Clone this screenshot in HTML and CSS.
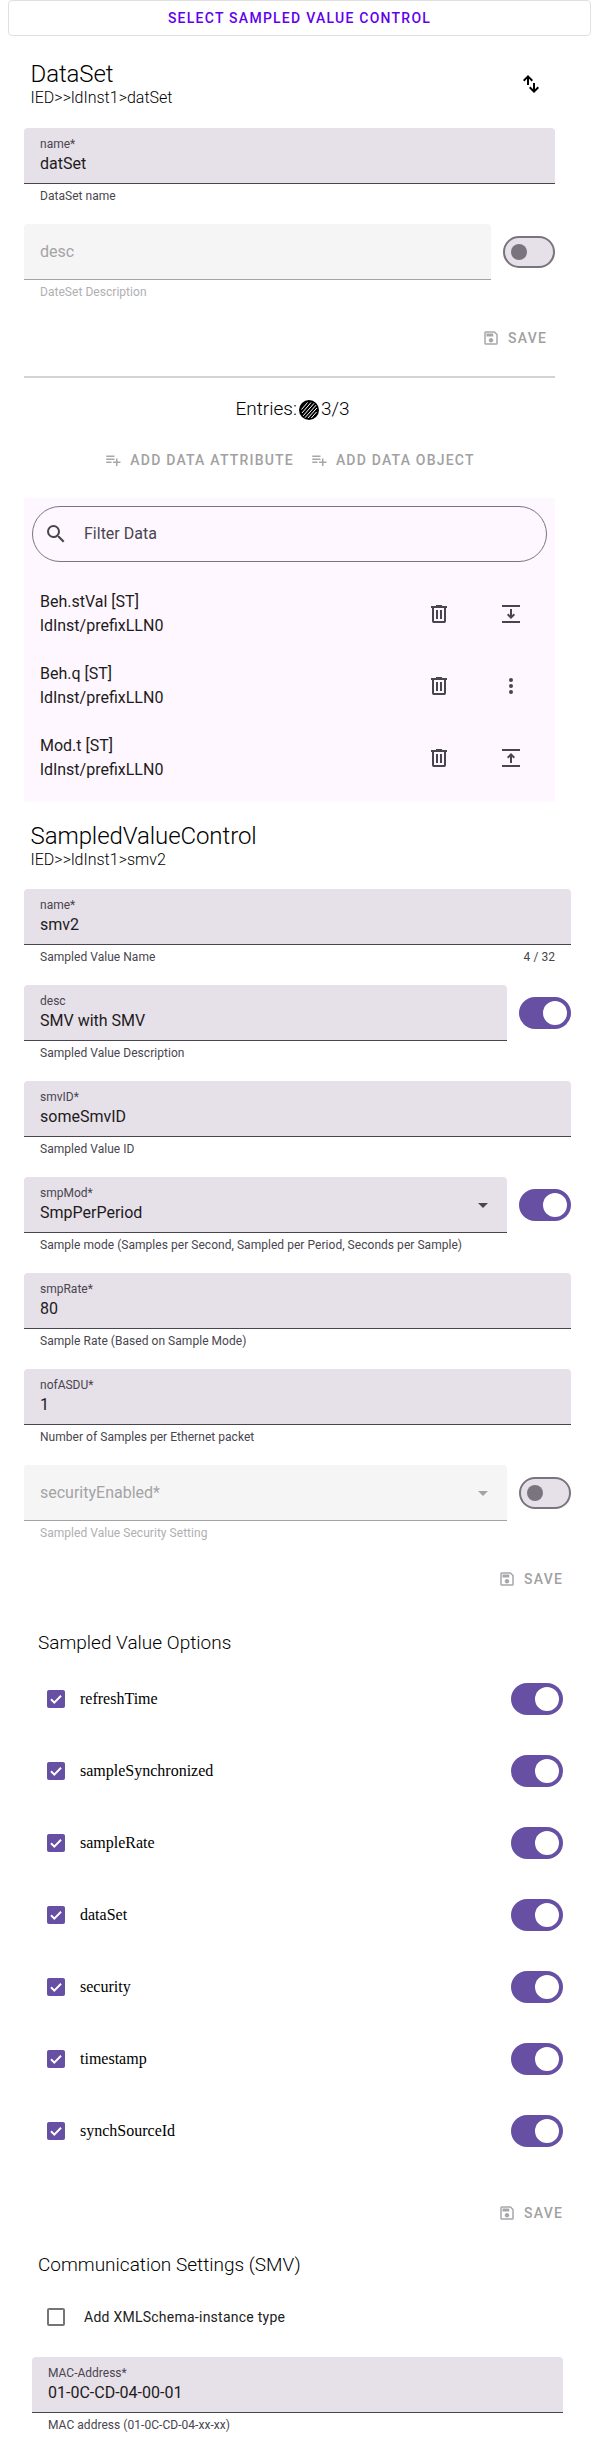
FILE: index.html
```html
<!DOCTYPE html>
<html lang="en">
<head>
<meta charset="utf-8">
<title>Sampled Value Control</title>
<link rel="stylesheet" href="styles.css">
</head>
<body>
<svg class="sprite" aria-hidden="true">
  <symbol id="save" viewBox="0 0 24 24"><path d="M17 3H5a2 2 0 0 0-2 2v14a2 2 0 0 0 2 2h14a2 2 0 0 0 2-2V7l-4-4zm2 16H5V5h11.17L19 7.83V19zm-7-7c-1.66 0-3 1.34-3 3s1.34 3 3 3 3-1.34 3-3-1.34-3-3-3zM6 6h9v4H6z"/></symbol>
  <symbol id="add" viewBox="0 0 24 24"><path d="M14 10H3v2h11v-2zm0-4H3v2h11V6zm4 8v-4h-2v4h-4v2h4v4h2v-4h4v-2h-4zM3 16h7v-2H3v2z"/></symbol>
  <symbol id="trash" viewBox="0 0 24 24"><path d="M7 21q-.825 0-1.412-.587Q5 19.825 5 19V6H4V4h5V3h6v1h5v2h-1v13q0 .825-.587 1.413Q17.825 21 17 21ZM17 6H7v13h10ZM9 17h2V8H9Zm4 0h2V8h-2Z"/></symbol>
  <symbol id="drop" viewBox="0 0 24 24"><path d="M7 10l5 5 5-5z"/></symbol>
  <symbol id="check" viewBox="0 0 18 18"><path d="M4 9.3l3.3 3.3L14 5.8" fill="none" stroke="#fff" stroke-width="2"/></symbol>
</svg>

<button class="select">Select Sampled Value Control</button>

<main>
  <section class="dataset">
    <header class="head">
      <div><h2>DataSet</h2><p>IED&gt;&gt;ldInst1&gt;datSet</p></div>
      <svg class="icon swap" viewBox="0 0 24 24"><path d="M8 13V6.825L5.4 9.4 4 8l5-5 5 5-1.4 1.4L10 6.825V13Zm7 8-5-5 1.4-1.4 2.6 2.575V11h2v6.175l2.6-2.575L20 16Z"/></svg>
    </header>
    <div class="row">
      <div class="field"><div class="box"><label>name*</label><span>datSet</span></div><div class="help">DataSet name</div></div>
    </div>
    <div class="row">
      <div class="field disabled"><div class="box"><span>desc</span></div><div class="help">DateSet Description</div></div>
      <div class="switch"></div>
    </div>
    <div class="actions"><button class="btn"><svg><use href="#save"/></svg>Save</button></div>
    <hr>
    <div class="entries">Entries:<svg viewBox="0 0 20 20"><circle cx="10" cy="10" r="10"/><path d="M2.5 9.5l6-7M3 13L12 2.5M4.2 15.8L15 3.4M6 17.7L17 5.2M9 18L17.8 8M12.3 18l5.2-6" stroke="#fff" stroke-width="1"/></svg>3/3</div>
    <div class="adders">
      <button class="btn"><svg><use href="#add"/></svg>Add Data Attribute</button>
      <button class="btn"><svg><use href="#add"/></svg>Add Data Object</button>
    </div>
    <div class="panel">
      <div class="search"><svg class="icon" viewBox="0 0 24 24"><path d="M15.5 14h-.79l-.28-.27A6.47 6.47 0 0 0 16 9.5 6.5 6.5 0 1 0 9.5 16c1.61 0 3.09-.59 4.23-1.57l.27.28v.79l5 4.99L20.49 19l-4.99-5zm-6 0C7.01 14 5 11.99 5 9.5S7.01 5 9.5 5 14 7.01 14 9.5 11.99 14 9.5 14z"/></svg>Filter Data</div>
      <div class="item"><div>Beh.stVal [ST]<br>ldInst/prefixLLN0</div><svg class="icon"><use href="#trash"/></svg>
        <svg class="icon" viewBox="0 0 24 24"><path d="M3 3h18v2H3zM3 19h18v2H3zM11 7h2v6.2l1.6-1.6L16 13l-4 4-4-4 1.4-1.4 1.6 1.6z"/></svg></div>
      <div class="item"><div>Beh.q [ST]<br>ldInst/prefixLLN0</div><svg class="icon"><use href="#trash"/></svg>
        <svg class="icon" viewBox="0 0 24 24"><circle cx="12" cy="6" r="2"/><circle cx="12" cy="12" r="2"/><circle cx="12" cy="18" r="2"/></svg></div>
      <div class="item"><div>Mod.t [ST]<br>ldInst/prefixLLN0</div><svg class="icon"><use href="#trash"/></svg>
        <svg class="icon" viewBox="0 0 24 24"><path d="M3 3h18v2H3zM3 19h18v2H3zM11 17h2v-6.2l1.6 1.6L16 11l-4-4-4 4 1.4 1.4 1.6-1.6z"/></svg></div>
    </div>
  </section>

  <section class="control">
    <header class="head"><div><h2>SampledValueControl</h2><p>IED&gt;&gt;ldInst1&gt;smv2</p></div></header>
    <div class="row"><div class="field"><div class="box"><label>name*</label><span>smv2</span></div><div class="help">Sampled Value Name<span>4 / 32</span></div></div></div>
    <div class="row"><div class="field"><div class="box"><label>desc</label><span>SMV with SMV</span></div><div class="help">Sampled Value Description</div></div><div class="switch on"></div></div>
    <div class="row"><div class="field"><div class="box"><label>smvID*</label><span>someSmvID</span></div><div class="help">Sampled Value ID</div></div></div>
    <div class="row"><div class="field"><div class="box select-box"><div class="stack"><label>smpMod*</label><span>SmpPerPeriod</span></div><svg class="icon"><use href="#drop"/></svg></div><div class="help">Sample mode (Samples per Second, Sampled per Period, Seconds per Sample)</div></div><div class="switch on"></div></div>
    <div class="row"><div class="field"><div class="box"><label>smpRate*</label><span>80</span></div><div class="help">Sample Rate (Based on Sample Mode)</div></div></div>
    <div class="row"><div class="field"><div class="box"><label>nofASDU*</label><span>1</span></div><div class="help">Number of Samples per Ethernet packet</div></div></div>
    <div class="row"><div class="field disabled"><div class="box select-box"><div class="stack"><span>securityEnabled*</span></div><svg class="icon"><use href="#drop"/></svg></div><div class="help">Sampled Value Security Setting</div></div><div class="switch"></div></div>
    <div class="actions"><button class="btn"><svg><use href="#save"/></svg>Save</button></div>

    <div class="options">
      <h3>Sampled Value Options</h3>
      <div class="option"><svg class="check"><use href="#check"/></svg><span>refreshTime</span><div class="switch on"></div></div>
      <div class="option"><svg class="check"><use href="#check"/></svg><span>sampleSynchronized</span><div class="switch on"></div></div>
      <div class="option"><svg class="check"><use href="#check"/></svg><span>sampleRate</span><div class="switch on"></div></div>
      <div class="option"><svg class="check"><use href="#check"/></svg><span>dataSet</span><div class="switch on"></div></div>
      <div class="option"><svg class="check"><use href="#check"/></svg><span>security</span><div class="switch on"></div></div>
      <div class="option"><svg class="check"><use href="#check"/></svg><span>timestamp</span><div class="switch on"></div></div>
      <div class="option"><svg class="check"><use href="#check"/></svg><span>synchSourceId</span><div class="switch on"></div></div>
    </div>
    <div class="actions options-actions"><button class="btn"><svg><use href="#save"/></svg>Save</button></div>

    <div class="communication">
      <h3>Communication Settings (SMV)</h3>
      <div class="xml"><i class="unchecked"></i>Add XMLSchema-instance type</div>
      <div class="field"><div class="box"><label>MAC-Address*</label><span>01-0C-CD-04-00-01</span></div><div class="help">MAC address (01-0C-CD-04-xx-xx)</div></div>
    </div>
  </section>
</main>
</body>
</html>
```
FILE: styles.css
```css
* { box-sizing: border-box; }
body { margin: 0; height: 2444px; overflow: hidden; background: #fff; font: 400 16px/24px Roboto, sans-serif; color: #1d1b20; }
h2, h3, p { margin: 0; font-weight: 300; color: #000; }
svg { display: block; flex: none; }
.sprite { position: absolute; width: 0; height: 0; }
.icon { width: 24px; height: 24px; fill: #49454f; }

button { margin: 0; background: none; border: 0; height: 36px; font: 500 14px/36px Roboto, sans-serif; letter-spacing: 1.25px; text-transform: uppercase; }
.select { display: block; width: 583px; margin-left: 8px; padding: 0; line-height: 34px; border: 1px solid #e0e0e0; border-radius: 4px; color: #6200ee; }
.btn { display: flex; align-items: center; gap: 8px; padding: 0 8px; color: #a1a1a1; letter-spacing: 1.2px; }
.btn svg { width: 18px; height: 18px; fill: #a8a6ab; }

main { padding: 0 24px; }
.dataset { width: 531px; padding-top: 20px; }
.control { width: 547px; padding-top: 14px; }
.head { display: flex; justify-content: space-between; height: 72px; padding: 3px 12px 0 6.5px; }
.head h2 { font-size: 24px; line-height: 28px; padding-top: 1px; letter-spacing: -.08px; }
.head p { font-size: 16px; line-height: 18px; padding-top: 1px; }
.swap { fill: #000; margin-top: 13px; }
.control .head { height: 73px; padding-top: 5px; }

.row { display: flex; gap: 12px; height: 96px; }
.field { flex: 1; }
.box { display: flex; flex-direction: column; justify-content: center; height: 56px; padding: 0 16px; background: #e6e0e9; border-bottom: 1px solid #49454f; border-radius: 4px 4px 0 0; }
.box label { display: block; font-size: 12px; line-height: 16px; color: #49454f; }
.box span { display: block; }
.stack { flex: 1; }
.select-box { flex-direction: row; align-items: center; padding-right: 12px; }
.help { display: flex; justify-content: space-between; padding: 4px 16px 0; font-size: 12px; line-height: 16px; letter-spacing: .04px; color: #49454f; }
.disabled .box { background: #f5f5f5; border-color: #a4a2a6; color: #a4a3a6; }
.disabled .help { color: #b0afb2; }
.disabled .icon { fill: #a4a2a6; }

.switch { flex: none; width: 52px; height: 32px; margin-top: 12px; padding: 6px; border: 2px solid #79747e; border-radius: 16px; background: #e6e0e9; }
.switch::before { content: ""; display: block; width: 16px; height: 16px; border-radius: 50%; background: #79747e; }
.switch.on { padding: 2px; border-color: #6750a4; background: #6750a4; }
.switch.on::before { width: 24px; height: 24px; margin-left: 20px; background: #fff; }

.actions { display: flex; justify-content: flex-end; height: 56px; }
hr { height: 2px; margin: 0; border: 0; background: #d3d3d3; }
.entries { display: flex; justify-content: center; align-items: center; height: 64px; padding: 0 0 3px 6px; font-size: 19px; font-weight: 300; color: #000; }
.entries svg { width: 20px; height: 20px; margin: 3px 2px 0; }
.adders { display: flex; justify-content: center; height: 56px; }

.panel { height: 304px; padding-top: 8px; background: #fef7ff; }
.search { display: flex; align-items: center; gap: 16px; height: 56px; margin: 0 8px 16px; padding-left: 11px; border: 1px solid #79747e; border-radius: 28px; color: #49454f; }
.item { display: flex; align-items: center; height: 72px; padding: 0 32px 0 16px; gap: 48px; }
.item div { flex: 1; }

h3 { font-size: 19px; line-height: 32px; padding-left: 6px; }
.options { padding: 0 8px; }
.options h3 { height: 36px; }
.option { display: flex; align-items: center; height: 72px; padding-left: 15px; font-family: "Liberation Serif", serif; color: #000; line-height: 18px; }
.option span { flex: 1; padding-left: 15px; }
.option .switch { margin: 0; }
.check { width: 18px; height: 18px; border-radius: 2px; background: #6750a4; }
.control > .actions { height: 66px; }
.control > .options-actions { padding-top: 28px; height: 82px; }

.communication { padding: 0 8px; }
.communication h3 { height: 40px; }
.xml { display: flex; align-items: center; height: 56px; gap: 19px; margin-bottom: 12px; padding-left: 15px; font-size: 14px; letter-spacing: .25px; color: #212121; }
.unchecked { width: 18px; height: 18px; border: 2px solid #757575; border-radius: 2px; }
```
